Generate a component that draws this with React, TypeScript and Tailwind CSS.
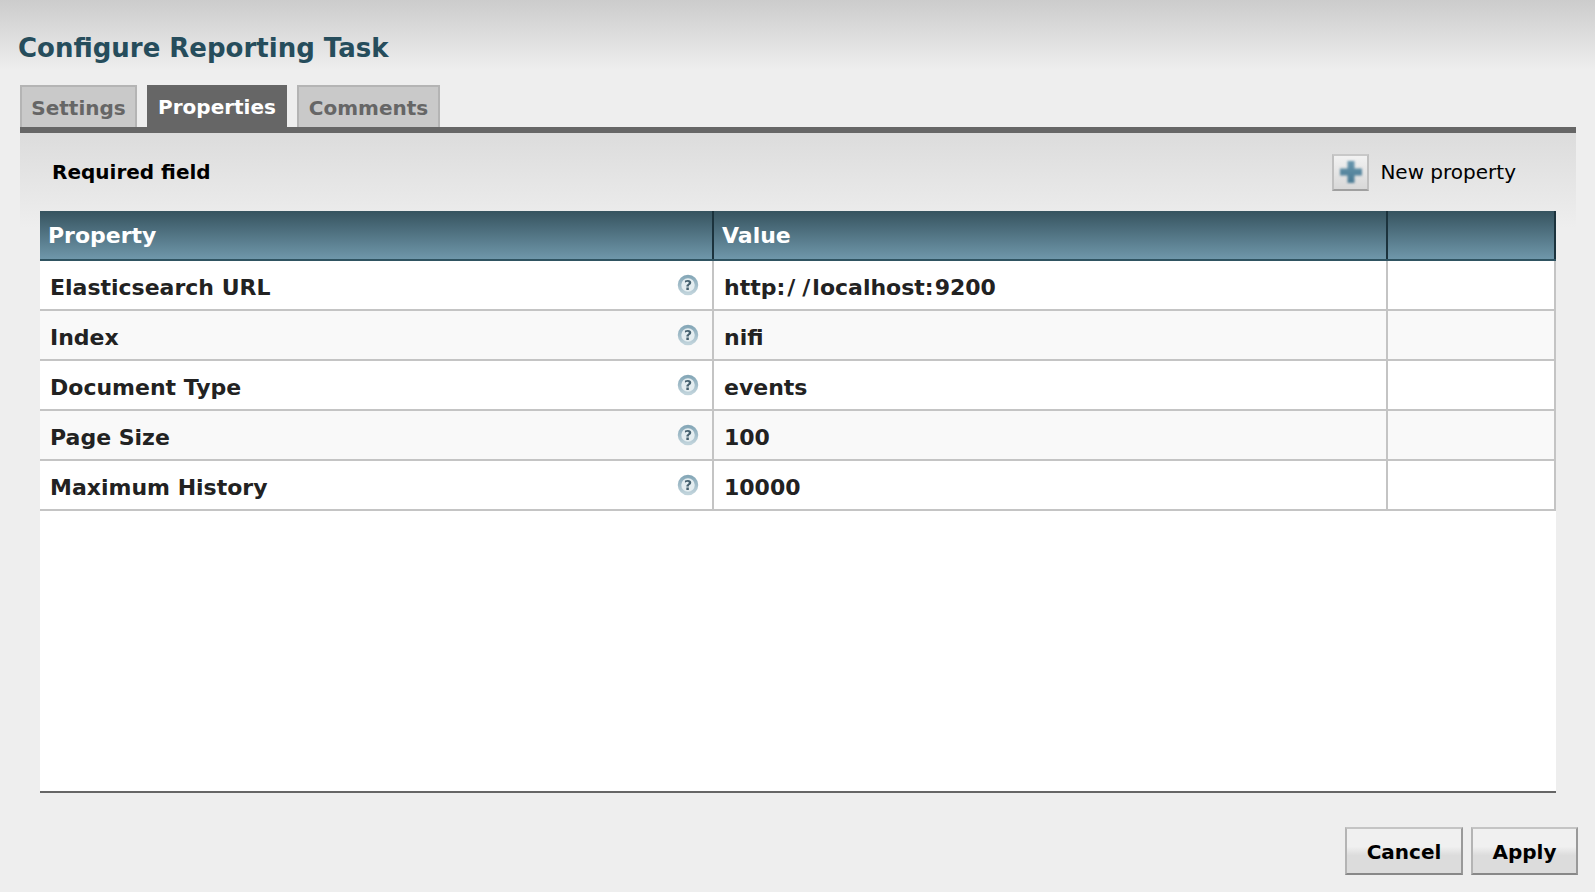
import React from "react";

const rows: { name: string; value: React.ReactNode }[] = [
  {
    name: "Elasticsearch URL",
    value: (
      <>
        http:<span className="ml-[2px] tracking-[7px]">/</span>
        <span className="tracking-[2px]">/</span>localhost<span className="tracking-[1px]">:</span>9200
      </>
    ),
  },
  { name: "Index", value: "nifi" },
  { name: "Document Type", value: "events" },
  { name: "Page Size", value: "100" },
  { name: "Maximum History", value: "10000" },
];

const HelpIcon: React.FC = () => (
  <svg width="22" height="22" viewBox="0 0 22 22" className="blur-[0.3px]">
    <defs>
      <linearGradient id="helpRing" x1="0" y1="0" x2="0" y2="1">
        <stop offset="0" stopColor="#86a8b8" />
        <stop offset="1" stopColor="#c0d3db" />
      </linearGradient>
    </defs>
    <circle cx="11" cy="11" r="8.5" fill="#e4edf0" stroke="url(#helpRing)" strokeWidth="3.5" />
    <text x="11" y="16" textAnchor="middle" fontFamily="'DejaVu Sans', sans-serif" fontWeight="700" fontSize="14" fill="#46616f">
      ?
    </text>
  </svg>
);

const PlusIcon: React.FC = () => (
  <svg width="24" height="24" viewBox="0 0 24 24" className="blur-[0.8px]">
    <defs>
      <linearGradient id="plusFill" x1="0" y1="0" x2="0" y2="1">
        <stop offset="0" stopColor="#6896ad" />
        <stop offset="1" stopColor="#4a7a93" />
      </linearGradient>
    </defs>
    <path d="M8.500 1h7v7.500H23v7h-7.500V23h-7v-7.500H1v-7h7.500z" fill="url(#plusFill)" />
  </svg>
);

const Tab: React.FC<{ label: string; active?: boolean; className: string }> = ({ label, active, className }) =>
  active ? (
    <div className={`flex items-center justify-center bg-[#666] pt-[2px] text-white ${className}`}>{label}</div>
  ) : (
    <div className={`flex items-center justify-center border-2 border-b-0 border-[#b4b4b4] bg-[#c9c9c9] pt-[2px] text-[#666] ${className}`}>{label}</div>
  );

const Row: React.FC<{ name: string; value: React.ReactNode; odd: boolean }> = ({ name, value, odd }) => (
  <div className={`grid h-[50px] grid-cols-[674px_674px_1fr] border-b-2 border-[#c4c4c4] ${odd ? "bg-[#f9f9f9]" : "bg-white"}`}>
    <div className="flex items-center justify-between border-r-2 border-[#c4c4c4] pr-[13px] pl-[10px]">
      <span className="pt-[4px]">{name}</span>
      <span>
        <HelpIcon />
      </span>
    </div>
    <div className="flex items-center border-r-2 border-[#c4c4c4] pt-[4px] pl-[10px] text-[#222]">
      <span>{value}</span>
    </div>
    <div className="border-r-2 border-[#c4c4c4]" />
  </div>
);

export default function App() {
  return (
    <div className="flex h-[892px] w-full flex-col overflow-hidden bg-[#eeeeee] font-['DejaVu_Sans',sans-serif] font-bold">
      <div className="h-[85px] bg-[linear-gradient(#cccccc,#eeeeee_70px)] pt-[30px] pl-[18px]">
        <h1 className="text-[26px] leading-[36px] font-bold text-[#264d5c]">Configure Reporting Task</h1>
      </div>

      <div className="flex h-[42px] gap-[10px] pl-[20px] text-[20px]">
        <Tab label="Settings" className="w-[117px]" />
        <Tab label="Properties" active className="w-[140px]" />
        <Tab label="Comments" className="w-[143px]" />
      </div>

      <div className="ml-[20px] mr-[19px] flex-1 border-t-[6px] border-[#666] bg-[linear-gradient(#dcdcdc,#eeeeee_95px)]">
        <div className="flex h-[78px] items-center justify-between pr-[60px] pl-[32px]">
          <span className="text-[20px] text-black">Required field</span>
          <div className="flex items-center gap-[11px]">
            <div className="flex h-[37px] w-[37px] items-center justify-center border-2 border-t-[#c8c8c8] border-r-[#c0c0c0] border-b-[#a0a0a0] border-l-[#c0c0c0] bg-[linear-gradient(#f2f2f2,#d8d8d8)]">
              <PlusIcon />
            </div>
            <span className="text-[20px] font-normal text-black">New property</span>
          </div>
        </div>

        <div className="mr-[20px] ml-[20px] flex h-[582px] flex-col border-b-2 border-[#666] bg-white text-[22px] text-[#222]">
          <div className="grid h-[50px] grid-cols-[674px_674px_1fr] border-b-2 border-[#2f5361] bg-[linear-gradient(#36535f,#6f97aa)] text-white">
            <div className="flex items-center border-r-2 border-[#1c333d] pl-[8px]">Property</div>
            <div className="flex items-center border-r-2 border-[#1c333d] pl-[8px]">Value</div>
            <div className="border-r-2 border-[#1c333d]" />
          </div>
          {rows.map((row, i) => (
            <Row key={row.name} name={row.name} value={row.value} odd={i % 2 === 1} />
          ))}
        </div>

        <div className="mt-[34px] -mr-[2px] flex justify-end gap-[8px] text-[20px] text-black">
          <button className="h-[48px] w-[118px] border-2 border-t-[#c4c4c4] border-r-[#999] border-b-[#888] border-l-[#b4b4b4] bg-[linear-gradient(#f0f0f0_40%,#dcdcdc_60%)] pt-[2px] font-bold">
            Cancel
          </button>
          <button className="h-[48px] w-[107px] border-2 border-t-[#c4c4c4] border-r-[#999] border-b-[#888] border-l-[#b4b4b4] bg-[linear-gradient(#f0f0f0_40%,#dcdcdc_60%)] pt-[2px] font-bold">
            Apply
          </button>
        </div>
      </div>
    </div>
  );
}
